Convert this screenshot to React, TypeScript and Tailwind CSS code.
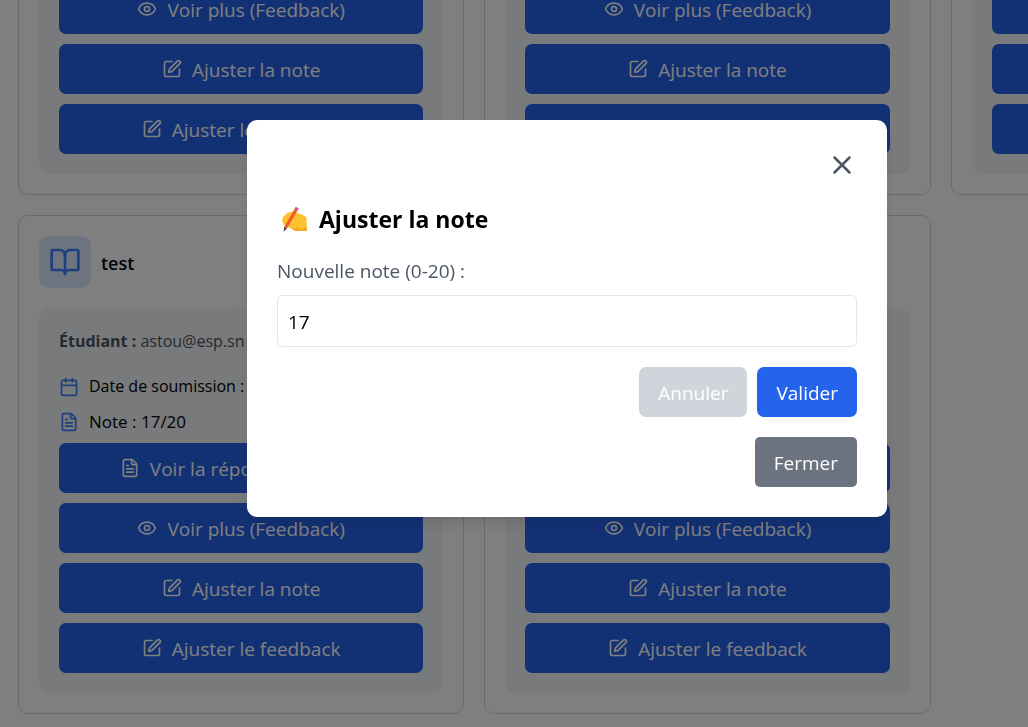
import { useState } from "react";
import type { ReactNode } from "react";
import { BookOpen, Calendar, Eye, FileText, SquarePen, X } from "lucide-react";

type Submission = {
  id: number;
  title: string;
  student: string;
  date: string;
  note: string;
};

const submissions: Submission[] = [1, 2, 3, 4, 5].map((id) => ({
  id,
  title: "test",
  student: "astou@esp.sn",
  date: "12/02/2025",
  note: "17/20",
}));

function ActionButton({ icon, children }: { icon: ReactNode; children: ReactNode }) {
  return (
    <button
      type="button"
      className="flex h-[50px] w-full items-center justify-center gap-[10px] rounded-[7px] bg-[#2563eb] text-[19px] leading-[30px] text-white"
    >
      {icon}
      <span className="pt-[2px]">{children}</span>
    </button>
  );
}

function SubmissionCard({ item }: { item: Submission }) {
  return (
    <article className="rounded-[10px] border border-[#d1d5db] bg-white p-5">
      <header className="mb-5 flex items-center gap-[10px]">
        <span className="rounded-[10px] bg-[#dbe6fe] p-[10px] text-[#3b82f6]">
          <BookOpen size={32} />
        </span>
        <h2 className="pt-[2px] text-[18px] leading-[28px] font-semibold text-[#020617]">{item.title}</h2>
      </header>
      <div className="rounded-[10px] bg-[#f3f4f6] p-5 text-[16px] leading-[27px]">
        <p className="mb-[18px] whitespace-nowrap text-[#4b5563]">
          <strong className="font-bold">Étudiant :</strong> {item.student}
        </p>
        <div className="flex flex-col gap-2">
          <p className="flex items-center gap-[10px] whitespace-nowrap text-black">
            <Calendar size={20} className="text-[#3b82f6]" />
            Date de soumission : {item.date}
          </p>
          <p className="flex items-center gap-[10px] text-[17px] text-black">
            <FileText size={20} className="text-[#3b82f6]" />
            Note : {item.note}
          </p>
          <div className="flex flex-col gap-[10px]">
            <ActionButton icon={<FileText size={20} />}>Voir la réponse soumise</ActionButton>
            <ActionButton icon={<Eye size={20} />}>Voir plus (Feedback)</ActionButton>
            <ActionButton icon={<SquarePen size={20} />}>Ajuster la note</ActionButton>
            <ActionButton icon={<SquarePen size={20} />}>Ajuster le feedback</ActionButton>
          </div>
        </div>
      </div>
    </article>
  );
}

function WritingHand() {
  return (
    <svg viewBox="0 -4 84 84" className="size-7" aria-hidden="true">
      <path d="M3 44 6 32 20 19 34 16 60 24 76 33 78 73 42 73 30 66 17 62 8 54Z" fill="#fdc02f" />
      <path d="M42 73 30 66 44 68 50 63 58 70 78 64 78 73Z" fill="#eda31f" />
      <path d="M40 9 49 14 18 66 10 61Z" fill="#f4592b" />
      <path d="M40 9 44 1 53 6 49 14Z" fill="#e0506b" />
      <path d="M10 61 18 66 8 76Z" fill="#4a2b35" />
    </svg>
  );
}

function AdjustNoteDialog() {
  const [note, setNote] = useState("17");
  return (
    <div className="fixed inset-0 flex items-start justify-center overflow-hidden bg-black/50 pt-[120px] pl-[106px]">
      <div
        role="dialog"
        aria-modal="true"
        aria-labelledby="dialog-title"
        className="flex w-full max-w-[640px] flex-col rounded-[10px] bg-white p-[30px] shadow-lg"
      >
        <button type="button" aria-label="Fermer la fenêtre" className="self-end text-[#4b5563]">
          <X size={30} />
        </button>
        <h2
          id="dialog-title"
          className="mt-5 flex items-center gap-[10px] pl-1 text-[23px] leading-[38px] font-bold text-black"
        >
          <WritingHand />
          Ajuster la note
        </h2>
        <label htmlFor="note" className="mt-[18px] text-[19px] leading-[30px] text-[#4b5563]">
          Nouvelle note (0-20) :
        </label>
        <input
          id="note"
          type="text"
          inputMode="numeric"
          value={note}
          onChange={(e) => setNote(e.target.value)}
          className="mt-[9px] h-[52px] w-full rounded-[5px] border border-[#e5e7eb] px-[10px] pt-[2px] text-[19px] text-black outline-none"
        />
        <div className="mt-5 flex justify-end gap-[10px] text-[19px] leading-[30px] text-white">
          <button type="button" className="h-[50px] rounded-[7px] bg-[#d1d5db] px-[19px] pt-[2px]">
            Annuler
          </button>
          <button type="button" className="h-[50px] rounded-[7px] bg-[#2563eb] px-[19px] pt-[2px]">
            Valider
          </button>
        </div>
        <button
          type="button"
          className="mt-5 h-[50px] self-end rounded-[5px] bg-[#6b7280] px-[19px] pt-[2px] text-[19px] leading-[30px] text-white"
        >
          Fermer
        </button>
      </div>
    </div>
  );
}

export default function App() {
  return (
    <div className="flex h-screen flex-col justify-end overflow-hidden bg-white pb-[13px] font-['Open_Sans','Noto_Sans',sans-serif]">
      <main className="ml-[18px] grid min-w-[1379px] grid-cols-3 gap-5">
        {submissions.map((item) => (
          <SubmissionCard key={item.id} item={item} />
        ))}
      </main>
      <AdjustNoteDialog />
    </div>
  );
}
